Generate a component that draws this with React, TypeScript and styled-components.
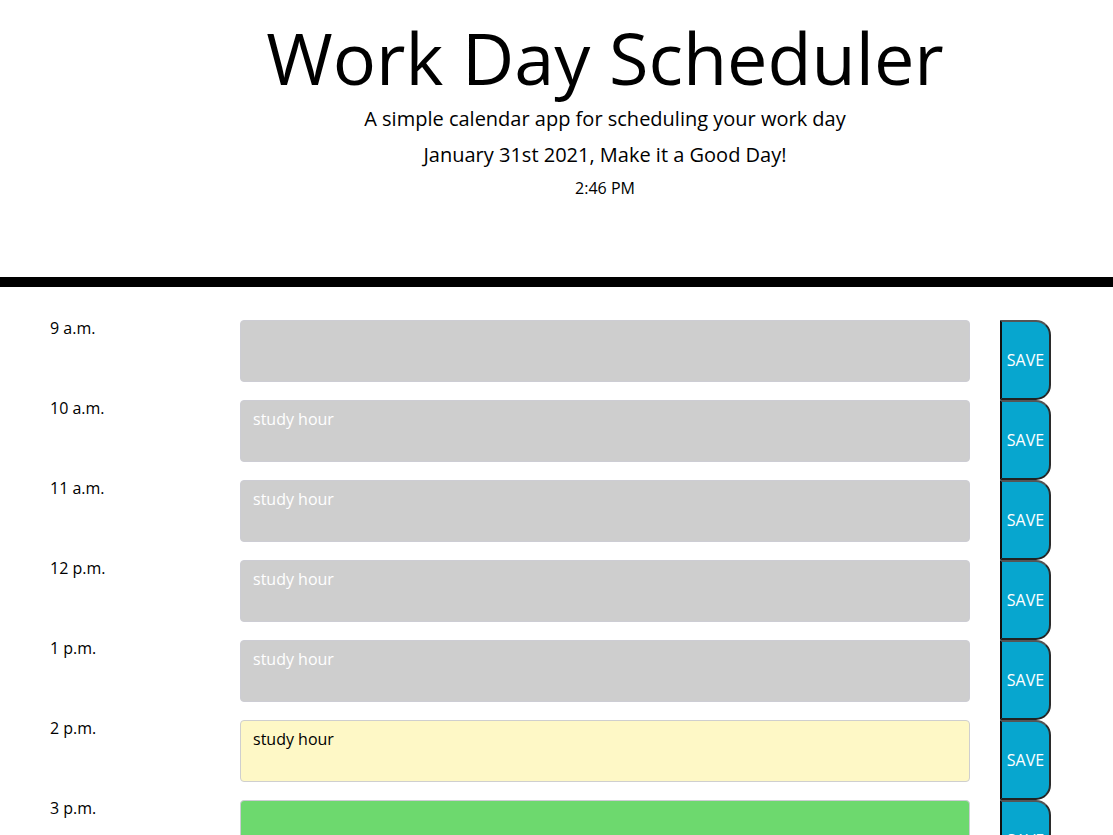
import React from "react";
import styled, { createGlobalStyle } from "styled-components";

const Global = createGlobalStyle`
  html, body { margin: 0; padding: 0; background: #ffffff; }
  body { font-family: "Open Sans", "DejaVu Sans", sans-serif; font-size: 16px; color: #000; overflow: hidden; }
  * { box-sizing: border-box; }
`;

const Header = styled.header`
  text-align: center;
  padding: 14px 0 0 97px;
  height: 287px;
  border-bottom: 10px solid #000;
`;

const Title = styled.h1`
  margin: 0;
  font-size: 72px;
  font-weight: 400;
  line-height: 1.2;
`;

const Lead = styled.p<{ $top: number }>`
  margin: ${(p) => p.$top}px 0 0;
  font-size: 20px;
  line-height: 30px;
`;

const Clock = styled.p`
  margin: 6px 0 0;
  font-size: 16px;
  line-height: 24px;
`;

const Schedule = styled.main`
  padding: 33px 0 0 50px;
`;

const Row = styled.div`
  display: flex;
  align-items: flex-start;
  height: 80px;
`;

const Hour = styled.div`
  width: 190px;
  flex: none;
  font-size: 16px;
  line-height: 16px;
`;

type Tense = "past" | "present" | "future";

const bg: Record<Tense, string> = {
  past: "#cecece",
  present: "#fef8c6",
  future: "#6dd96e",
};

const Block = styled.div<{ $tense: Tense }>`
  width: 730px;
  flex: none;
  height: 62px;
  background: ${(p) => bg[p.$tense]};
  color: ${(p) => (p.$tense === "present" ? "#000" : "#fff")};
  border: 1px solid ${(p) => (p.$tense === "present" ? "#cfcfcf" : "#cdcdd4")};
  border-radius: 4px;
  padding: 6px 12px;
  font-size: 16px;
  line-height: 24px;
`;

const SaveBtn = styled.button`
  flex: none;
  height: 80px;
  width: 51px;
  margin: 0 0 0 30px;
  padding: 0;
  background: #07a6cf;
  color: #fff;
  font-family: "Open Sans", "DejaVu Sans", sans-serif;
  font-size: 16px;
  border-style: solid;
  border-width: 2px;
  border-color: #555 #2b2b2b #222 #111;
  border-radius: 0 15px 15px 0;
  display: flex;
  align-items: center;
  justify-content: center;
`;

const hours: { label: string; text: string; tense: Tense }[] = [
  { label: "9 a.m.", text: "", tense: "past" },
  { label: "10 a.m.", text: "study hour", tense: "past" },
  { label: "11 a.m.", text: "study hour", tense: "past" },
  { label: "12 p.m.", text: "study hour", tense: "past" },
  { label: "1 p.m.", text: "study hour", tense: "past" },
  { label: "2 p.m.", text: "study hour", tense: "present" },
  { label: "3 p.m.", text: "", tense: "future" },
];

export default function App() {
  return (
    <>
      <Global />
      <Header>
        <Title>Work Day Scheduler</Title>
        <Lead $top={4}>A simple calendar app for scheduling your work day</Lead>
        <Lead $top={6}>January 31st 2021, Make it a Good Day!</Lead>
        <Clock>2:46 PM</Clock>
      </Header>
      <Schedule>
        {hours.map((h) => (
          <Row key={h.label}>
            <Hour>{h.label}</Hour>
            <Block $tense={h.tense}>{h.text}</Block>
            <SaveBtn>SAVE</SaveBtn>
          </Row>
        ))}
      </Schedule>
    </>
  );
}
